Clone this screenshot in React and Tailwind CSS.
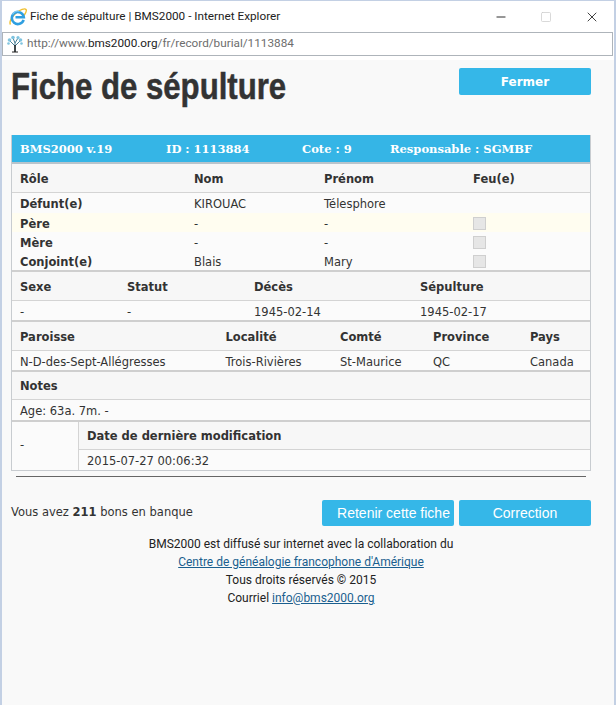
import { Minus, Square, X } from 'lucide-react'

const people = [
  { role: 'Défunt(e)', nom: 'KIROUAC', prenom: 'Télesphore', h: 'h-[20px]' },
  { role: 'Père', nom: '-', prenom: '-', feu: true, h: 'h-[19px]', bg: 'bg-[#fffdf0]' },
  { role: 'Mère', nom: '-', prenom: '-', feu: true, h: 'h-[19px]' },
  { role: 'Conjoint(e)', nom: 'Blais', prenom: 'Mary', feu: true, h: 'h-[19px]' },
]

function IeLogo() {
  return (
    <svg viewBox="0 0 18 18" className="w-[18px] h-[18px] shrink-0">
      <path d="M1.500 16.500c-1.500-2 .5-7 5-11s9.500-5.500 10.500-4c1 1.500-.5 4-2 6" fill="none" stroke="#f0c030" strokeWidth="1.400" />
      <path d="M14.600 11.800a6 6 0 1 1 .2-2.600H6.500" fill="none" stroke="#2f9fe0" strokeWidth="2.600" />
      <path d="M3.500 6.500a6.200 6.200 0 0 1 7-3" fill="none" stroke="#7cc8f0" strokeWidth="1.200" />
    </svg>
  )
}

function TreeLogo() {
  return (
    <svg viewBox="0 0 18 18" className="w-[18px] h-[18px] shrink-0">
      <path d="M9 17V8M9 11L4 6M9 11l5-5M9 8L7 3M9 8l3-5" stroke="#4a7f95" strokeWidth="1" fill="none" />
      <path d="M9 17V10" stroke="#222" strokeWidth="1.500" />
      <path d="M6 17h6" stroke="#222" strokeWidth="1" />
      <g fill="#7fc4e0">
        <circle cx="3.500" cy="5" r="1.800" />
        <circle cx="14.500" cy="5" r="1.800" />
        <circle cx="7" cy="2.500" r="1.800" />
        <circle cx="12" cy="2.500" r="1.600" />
        <circle cx="2.500" cy="8.500" r="1.300" />
        <circle cx="15.500" cy="8.500" r="1.300" />
      </g>
    </svg>
  )
}

function Check() {
  return <span className="block w-[13px] h-[13px] bg-[#e6e6e6] border border-[#cfcfcf]" />
}

function HeadRow({ cols, items, h = 'h-[29px]' }) {
  return (
    <div className={`grid ${cols} ${h} items-center px-[8px] pt-[3px] bg-[#f7f7f7] border-b border-[#d4d4d4] font-bold text-[#333]`}>
      {items.map((t, i) => <span key={i}>{t}</span>)}
    </div>
  )
}

function ValueRow({ cols, items, h = 'h-[21px]' }) {
  return (
    <div className={`grid ${cols} ${h} items-center px-[8px] pt-[3px] bg-[#fbfbfb] border-b-2 border-[#cfcfcf]`}>
      {items.map((t, i) => <span key={i}>{t}</span>)}
    </div>
  )
}

export default function App() {
  const cols1 = 'grid-cols-[174px_130px_149px_1fr]'
  const cols2 = 'grid-cols-[107px_127px_166px_1fr]'
  const cols3 = 'grid-cols-[205.500px_114.500px_93px_97px_1fr]'

  return (
    <div className="w-[616px] h-[705px] flex flex-col bg-white border-x-2 border-t border-[#c3d0e4] font-['DejaVu_Sans','Liberation_Sans',sans-serif] text-[11.5px] text-[#333] overflow-hidden">
      {/* Title bar */}
      <div className="h-[31px] flex items-center pl-[7px] shrink-0">
        <IeLogo />
        <span className="ml-[3px] text-[#222] font-['Roboto',sans-serif] text-[11.750px]">Fiche de sépulture | BMS2000 - Internet Explorer</span>
        <div className="ml-auto flex items-center pr-[14px] gap-[32px]">
          <Minus className="w-[14px] h-[14px] text-[#111]" strokeWidth={1.500} />
          <Square className="w-[12px] h-[12px] text-[#ccc]" strokeWidth={1.500} />
          <X className="w-[16px] h-[16px] text-[#111]" strokeWidth={1.200} />
        </div>
      </div>

      {/* Address bar */}
      <div className="h-[24px] flex items-center border border-[#aeb4ba] mr-[1px] pl-[3px] shrink-0 font-['Roboto',sans-serif] text-[11.750px] text-[#6d6d6d]">
        <TreeLogo />
        <span className="ml-[3px]">http://www.<span className="text-[#222]">bms2000.org</span>/fr/record/burial/1113884</span>
      </div>

      <div className="h-[4px] shrink-0" />

      {/* Page */}
      <div className="flex-1 bg-[#f9f9f9] pl-[9px] pr-[23px]">
        <div className="flex items-start h-[75px]">
          <h1 className="pt-[5px] origin-left scale-x-[0.865] [-webkit-text-stroke:0.5px_#333] font-['Liberation_Sans',sans-serif] font-bold text-[36px] leading-[44px] text-[#333] whitespace-nowrap">Fiche de sépulture</h1>
          <button className="ml-auto mt-[8px] w-[132px] h-[27px] rounded-[2px] bg-[#35b7e8] text-white font-bold text-[12px]">Fermer</button>
        </div>

        {/* Record */}
        <div className="border-x border-b border-[#c8ccd0] w-[580px]">
          <div className="h-[29px] flex items-center px-[8px] pt-[2px] bg-[#35b5e6] border-b-2 border-[#b8c4cc] text-white font-bold font-['DejaVu_Serif',serif] text-[11.500px]">
            <span className="w-[146px]">BMS2000 v.19</span>
            <span className="w-[136px]">ID : 1113884</span>
            <span className="w-[88px]">Cote : 9</span>
            <span>Responsable : SGMBF</span>
          </div>

          <HeadRow cols={cols1} items={['Rôle', 'Nom', 'Prénom', 'Feu(e)']} />
          <div className="border-b-2 border-[#cfcfcf] bg-[#fbfbfb]">
            {people.map((p) => (
              <div key={p.role} className={`grid ${cols1} ${p.h} ${p.bg || ''} items-center px-[8px]`}>
                <span className="font-bold pt-[3px]">{p.role}</span>
                <span className="pt-[3px]">{p.nom}</span>
                <span className="pt-[3px]">{p.prenom}</span>
                <span>{p.feu && <Check />}</span>
              </div>
            ))}
          </div>

          <HeadRow cols={cols2} items={['Sexe', 'Statut', 'Décès', 'Sépulture']} />
          <ValueRow cols={cols2} items={['-', '-', '1945-02-14', '1945-02-17']} />

          <HeadRow cols={cols3} items={['Paroisse', 'Localité', 'Comté', 'Province', 'Pays']} />
          <ValueRow cols={cols3} items={['N-D-des-Sept-Allégresses', 'Trois-Rivières', 'St-Maurice', 'QC', 'Canada']} />

          <HeadRow cols="grid-cols-1" items={['Notes']} h="h-[28px]" />
          <ValueRow cols="grid-cols-1" items={['Age: 63a. 7m. -']} h="h-[22px]" />

          <div className="flex h-[48px]">
            <div className="w-[67px] shrink-0 flex items-center px-[8px] bg-[#fbfbfb] border-r border-[#d4d4d4]">-</div>
            <div className="flex-1">
              <div className="h-[28px] flex items-center px-[8px] pt-[3px] bg-[#f7f7f7] border-b border-[#d4d4d4] font-bold">Date de dernière modification</div>
              <div className="h-[20px] flex items-center px-[8px] pt-[3px] bg-[#fbfbfb]">2015-07-27 00:06:32</div>
            </div>
          </div>
        </div>

        <hr className="mt-[5px] ml-[5px] w-[570px] border-t border-[#666]" />

        {/* Actions */}
        <div className="mt-[23px] flex items-center">
          <span>Vous avez <b>211</b> bons en banque</span>
          <div className="ml-auto flex gap-[5px]">
            <button className="w-[132px] h-[26px] pl-[11px] rounded-[2px] bg-[#35b7e8] text-white font-['Liberation_Sans',sans-serif] text-[14px]">Retenir cette fiche</button>
            <button className="w-[132px] h-[26px] rounded-[2px] bg-[#35b7e8] text-white font-['Liberation_Sans',sans-serif] text-[14px]">Correction</button>
          </div>
        </div>

        {/* Footer */}
        <div className="mt-[9px] text-center leading-[18px] w-[580px] font-['Roboto',sans-serif] text-[12px] text-[#222]">
          <p>BMS2000 est diffusé sur internet avec la collaboration du</p>
          <p><a href="#" className="underline text-[#1a5f8f]">Centre de généalogie francophone d'Amérique</a></p>
          <p>Tous droits réservés © 2015</p>
          <p>Courriel <a href="#" className="underline text-[#1a5f8f]">info@bms2000.org</a></p>
        </div>
      </div>
    </div>
  )
}
